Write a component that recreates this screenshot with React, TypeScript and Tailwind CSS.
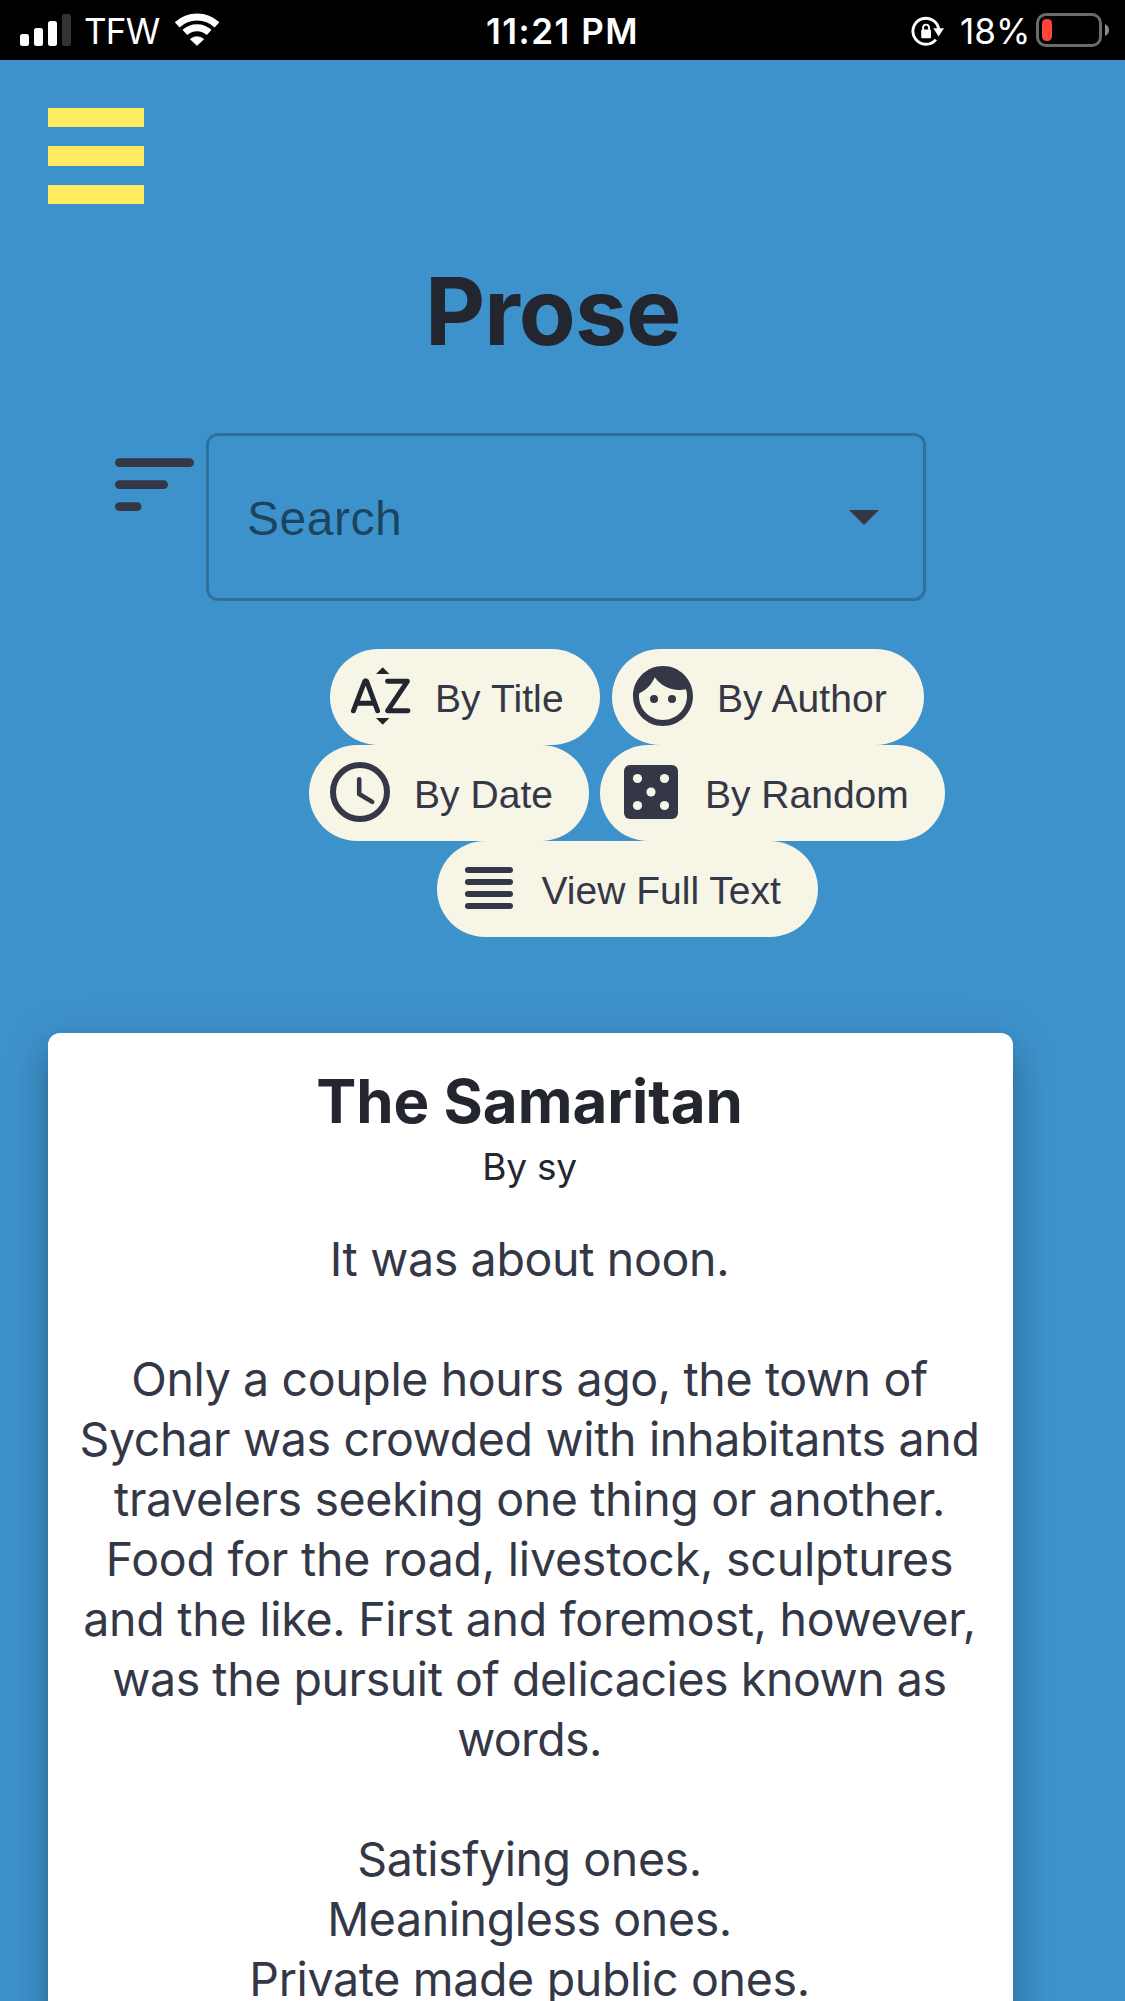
import type { ReactNode } from "react";

function StatusBar() {
  return (
    <header className="grid h-[60px] grid-cols-[1fr_auto_1fr] bg-black text-[35px] leading-[42px] text-white">
      <div className="flex items-start pl-5">
        <svg className="mt-[14px] h-8 w-[51px]" viewBox="0 0 51 32" fill="#fff">
          <rect x="0" y="20" width="9" height="12" rx="2.5" />
          <rect x="14" y="14" width="9" height="18" rx="2.5" />
          <rect x="28" y="7" width="9" height="25" rx="2.5" />
          <rect x="42" y="0" width="9" height="32" rx="2.5" fill="#333" />
        </svg>
        <span className="mt-[10px] ml-[13px] w-[77px] tracking-[-0.8px] whitespace-nowrap">TFW</span>
        <svg className="mt-[12px] ml-[13px] h-[35px] w-[46px]" viewBox="0 0 46 35" fill="none" stroke="#fff" strokeWidth="7">
          <path d="M3.2 13.2A29.4 29.4 0 0 1 43 13.2" transform="translate(0 -0.4)" />
          <path d="M10.8 20.8A18.2 18.2 0 0 1 35.2 20.8" transform="translate(0 -0.4)" />
          <path d="M16.4 27.2A10 10 0 0 1 29.6 27.2L23 33.4Z" fill="#fff" stroke="#fff" strokeWidth="0.8" strokeLinejoin="round" />
        </svg>
      </div>
      <span className="mt-[10px] font-semibold tracking-[1.5px] whitespace-nowrap">11:21 PM</span>
      <div className="flex items-start justify-end pr-[15px]">
        <svg className="mt-[15px] h-8 w-[34px]" viewBox="0 0 34 32" fill="none" stroke="#fff">
          <path d="M27.8 14.5A13 13 0 1 0 24.9 24.6" strokeWidth="2.9" />
          <path d="M22.3 13.2H33L27.6 21.4Z" fill="#fff" stroke="none" />
          <rect x="10.2" y="14.6" width="9.8" height="8.6" rx="1.2" fill="#fff" stroke="none" />
          <path d="M12.1 15V12.6A3 3 0 0 1 18.1 12.6V15" strokeWidth="1.9" />
        </svg>
        <span className="mt-[10px] ml-[15px] w-[76px] whitespace-nowrap">18%</span>
        <svg className="mt-[13px] h-[34px] w-[74px]" viewBox="0 0 74 34">
          <rect x="1.5" y="1.5" width="63" height="31" rx="8.5" fill="none" stroke="#6b6b6b" strokeWidth="3" />
          <rect x="6" y="6" width="10" height="22" rx="4.5" fill="#ff453a" />
          <path d="M69 11Q73 13 73 17T69 23Z" fill="#8a8a8a" />
        </svg>
      </div>
    </header>
  );
}

function Icon({ children }: { children: ReactNode }) {
  return (
    <svg className="mb-[2px] h-[72px] w-[72px] shrink-0" viewBox="0 0 72 72" fill="currentColor">
      {children}
    </svg>
  );
}

const sortAlphaIcon = (
  <Icon>
    <g fill="none" stroke="#23252f" strokeWidth="4.9" strokeLinecap="round" strokeLinejoin="round">
      <path d="M8.4 50.8L19.8 21.2Q20.7 20 21.6 21.2L32.6 50.8M12.5 43.3H29" />
      <path d="M42.5 21.3H62.4L42.5 50.8H63" />
    </g>
    <path d="M31 14L37.7 7.3L44.4 14ZM31 58L37.7 64.7L44.4 58Z" fill="#23252f" />
  </Icon>
);

const faceIcon = (
  <Icon>
    <circle cx="27" cy="39" r="4" />
    <circle cx="45" cy="39" r="4" />
    <path
      transform="scale(3)"
      d="M12 2C6.48 2 2 6.48 2 12s4.48 10 10 10 10-4.48 10-10S17.52 2 12 2zm0 18c-4.41 0-8-3.59-8-8 0-.29.02-.58.05-.86 2.36-1.05 4.23-2.98 5.21-5.37C11.07 8.33 14.05 10 17.42 10c.78 0 1.53-.09 2.25-.26.21.71.33 1.47.33 2.26 0 4.41-3.59 8-8 8z"
      fillRule="evenodd"
    />
  </Icon>
);

const clockIcon = (
  <Icon>
    <circle cx="36" cy="36" r="27" fill="none" stroke="currentColor" strokeWidth="6" />
    <path d="M35.2 23.2V38L48.2 45.9" fill="none" stroke="currentColor" strokeWidth="4.6" strokeLinecap="round" strokeLinejoin="round" />
  </Icon>
);

const diceIcon = (
  <Icon>
    <rect x="9" y="9" width="54" height="54" rx="6" />
    <g fill="#f7f5e6">
      <circle cx="22.5" cy="22.5" r="4.6" />
      <circle cx="49.5" cy="22.5" r="4.6" />
      <circle cx="36" cy="36" r="4.6" />
      <circle cx="22.5" cy="49.5" r="4.6" />
      <circle cx="49.5" cy="49.5" r="4.6" />
    </g>
  </Icon>
);

const linesIcon = (
  <Icon>
    <rect x="13" y="15" width="48" height="6" rx="3" />
    <rect x="13" y="27" width="48" height="6" rx="3" />
    <rect x="13" y="39" width="48" height="6" rx="3" />
    <rect x="13" y="51" width="48" height="6" rx="3" />
  </Icon>
);

function Chip({ icon, label, className }: { icon: ReactNode; label: string; className: string }) {
  return (
    <button
      className={`flex h-24 items-center gap-[18px] rounded-full bg-[#f7f5e6] pl-[15px] text-left font-['Liberation_Sans',Arial,sans-serif] text-[39px] leading-[44px] whitespace-nowrap text-[#343746] ${className}`}
    >
      {icon}
      <span className="pt-1">{label}</span>
    </button>
  );
}

const story: [string, string][] = [
  ["It was about noon.", "tracking-[-0.336px]"],
  ["", ""],
  ["Only a couple hours ago, the town of", "tracking-[-0.38px]"],
  ["Sychar was crowded with inhabitants and", "tracking-[-0.328px]"],
  ["travelers seeking one thing or another.", "tracking-[-0.36px]"],
  ["Food for the road, livestock, sculptures", "tracking-[-0.22px]"],
  ["and the like. First and foremost, however,", "tracking-[-0.261px]"],
  ["was the pursuit of delicacies known as", "tracking-[-0.44px]"],
  ["words.", "tracking-[-0.6px]"],
  ["", ""],
  ["Satisfying ones.", "tracking-[-0.416px]"],
  ["Meaningless ones.", "tracking-[-0.397px]"],
  ["Private made public ones.", "tracking-[-0.33px]"],
];

export default function App() {
  return (
    <div className="h-[2001px] w-[1125px] overflow-hidden bg-[#3e92cc] font-[Inter,sans-serif]">
      <StatusBar />

      <button className="mt-12 ml-12 flex h-24 w-24 flex-col justify-between" aria-label="Menu">
        <span className="h-[19px] w-full bg-[#ffec60]" />
        <span className="h-5 w-full bg-[#ffec60]" />
        <span className="h-[19px] w-full bg-[#ffec60]" />
      </button>

      <h1 className="mt-[51px] pl-[425px] text-[93px] leading-[112px] font-bold tracking-[-1px] text-[#23252f]">Prose</h1>

      <div className="mt-[66px] flex items-start pl-[115px]">
        <svg className="mt-[25px] h-[53px] w-[79px]" viewBox="0 0 79 53" fill="#343746">
          <rect x="0" y="0.3" width="79" height="8.8" rx="4.4" />
          <rect x="0" y="22.2" width="53" height="8.8" rx="4.4" />
          <rect x="0" y="44.2" width="26.5" height="8.8" rx="4.4" />
        </svg>
        <div className="ml-3 flex h-[168px] w-[720px] items-center justify-between rounded-xl border-[3px] border-black/23 pr-[44px] pl-[38px]">
          <span className="pt-[3px] font-['Liberation_Sans',Arial,sans-serif] text-[48px] leading-[54px] tracking-[0.5px] text-black/54">
            Search
          </span>
          <svg className="h-[15px] w-[30px]" viewBox="0 0 30 15" fill="#343746">
            <path d="M0 0H30L15 15Z" />
          </svg>
        </div>
      </div>

      <div className="mt-12 ml-[309px] flex w-[636px] flex-col items-center">
        <div className="flex gap-3">
          <Chip icon={sortAlphaIcon} label="By Title" className="w-[270px] tracking-[0.1px]" />
          <Chip icon={faceIcon} label="By Author" className="w-[312px] tracking-[0.08px]" />
        </div>
        <div className="flex gap-[11px]">
          <Chip icon={clockIcon} label="By Date" className="w-[280px] tracking-[0.05px]" />
          <Chip icon={diceIcon} label="By Random" className="w-[345px]" />
        </div>
        <Chip icon={linesIcon} label="View Full Text" className="w-[381px] tracking-[0.02px]" />
      </div>

      <article className="mt-24 ml-12 h-[1200px] w-[965px] rounded-xl bg-white pt-8 pr-[2px] text-center shadow-[0_15px_15px_-9px_rgba(0,0,0,0.2),0_24px_30px_3px_rgba(0,0,0,0.14),0_9px_42px_6px_rgba(0,0,0,0.12)]">
        <h2 className="text-[60px] leading-[72px] font-bold text-[#23252f]">The Samaritan</h2>
        <p className="mt-2 text-[37px] leading-[44px] tracking-[-0.2px] text-[#23252f]">By sy</p>
        <div className="mt-10 text-[46.5px] leading-[60px] whitespace-nowrap text-[#343746]">
          {story.map(([line, tracking], i) => (
            <p key={i} className={`h-[60px] ${tracking}`}>
              {line}
            </p>
          ))}
        </div>
      </article>
    </div>
  );
}
